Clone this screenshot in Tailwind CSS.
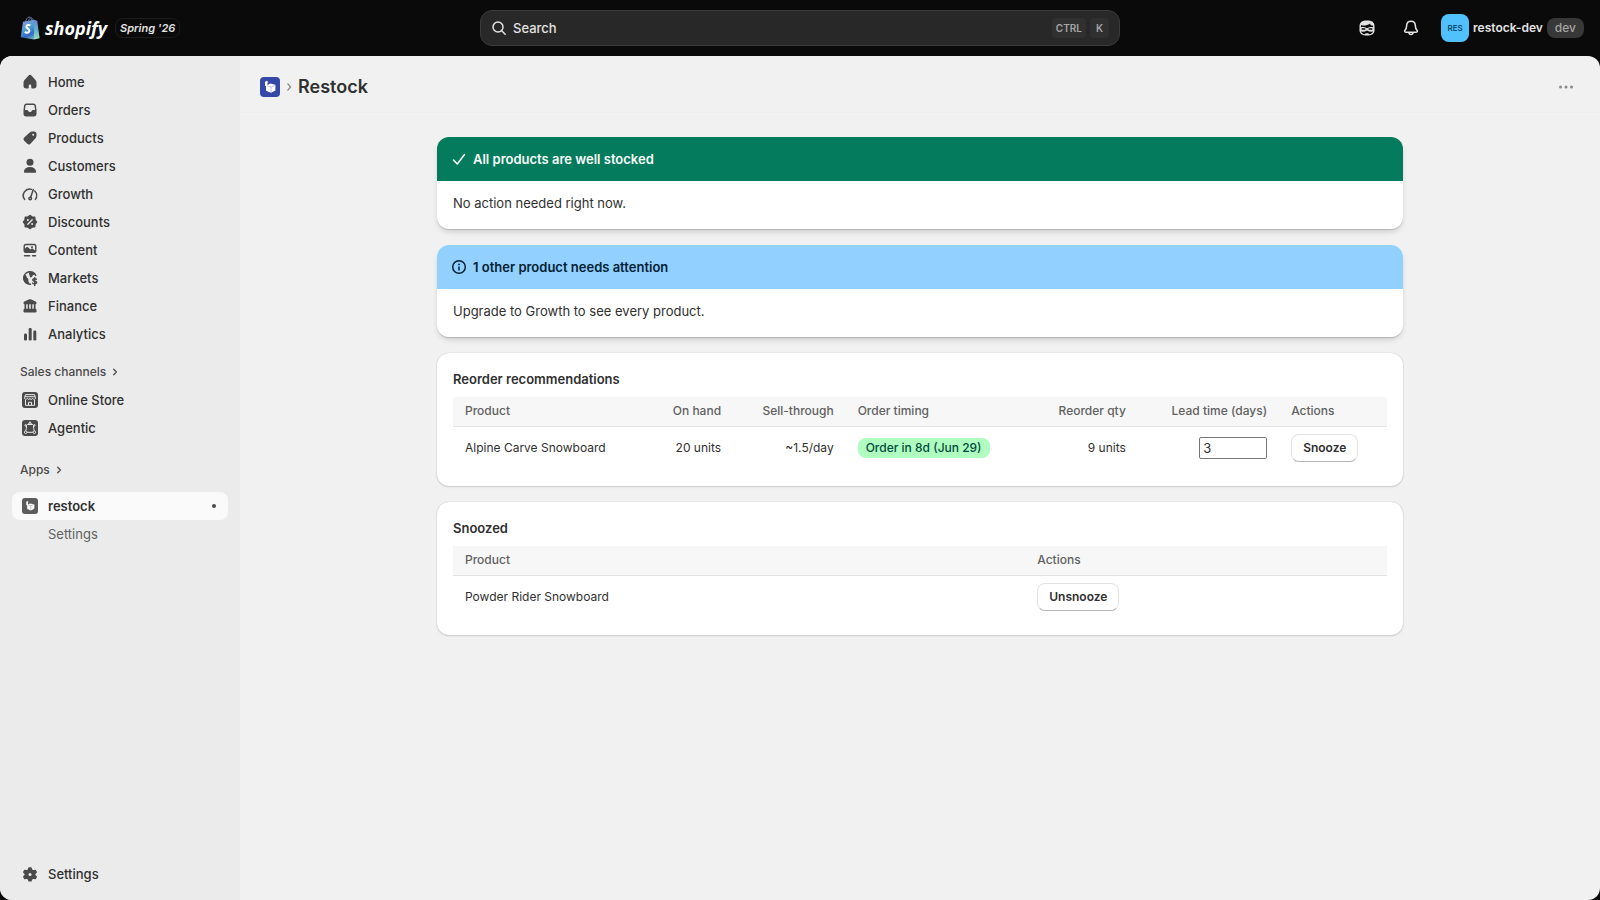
<!DOCTYPE html>
<html lang="en">
<head>
    <meta charset="UTF-8">
    <meta name="viewport" content="width=device-width, initial-scale=1.0">
    <title>Restock</title>
    <script src="https://cdn.jsdelivr.net/npm/@tailwindcss/browser@4"></script>
</head>
<body class="bg-[#0a0a0a] font-['Inter',sans-serif] text-[13px] leading-5 text-[#303030]">
<div class="flex min-h-screen flex-col">

    <!-- Top bar -->
    <header class="grid h-14 grid-cols-[1fr_minmax(0,640px)_1fr] items-center">
        <div class="flex items-center pl-5">
            <a href="#" class="flex items-center gap-[5px] text-white">
                <svg class="h-6 w-5" viewBox="0 0 20 24" fill="none">
                    <defs>
                        <linearGradient id="bag" x1="3" y1="4" x2="14" y2="24" gradientUnits="userSpaceOnUse">
                            <stop stop-color="#8b93d8"/>
                            <stop offset=".4" stop-color="#4f9fd0"/>
                            <stop offset=".7" stop-color="#3569c4"/>
                            <stop offset="1" stop-color="#7cc7c8"/>
                        </linearGradient>
                        <linearGradient id="side" x1="16" y1="5" x2="17" y2="24" gradientUnits="userSpaceOnUse">
                            <stop stop-color="#6f86d6"/>
                            <stop offset=".5" stop-color="#5fb6c9"/>
                            <stop offset="1" stop-color="#a5dfb8"/>
                        </linearGradient>
                    </defs>
                    <path d="M5.500 6.200C6 3.200 7.500 1 9.200 1c1.500 0 2.300 1.800 2.500 4.200M8.200 5.800C8.700 3.300 10 1.900 11.300 1.900c1 0 1.700 1 1.900 2.900" stroke="#6d7fb0" stroke-width=".9"/>
                    <path d="M3 5.800 14 3.800v19.800L.7 21.300 3 5.800Z" fill="url(#bag)"/>
                    <path d="M14 3.800 17.200 4.800 19.600 22.200 14 23.600V3.800Z" fill="url(#side)"/>
                    <path d="M10.300 9.400c-.8-.5-3.900-.9-3.900 1.300 0 2 3.300 2 3 4.300-.2 2-2.900 2.100-4.600.9" stroke="#fff" stroke-width="2.100"/>
                </svg>
                <span class="font-['Open_Sans',sans-serif] text-lg leading-6 font-bold italic">shopify</span>
            </a>
            <span class="ml-2 rounded-lg border border-[#1c1c1c] px-1 text-[11px] leading-[18px] font-semibold text-[#e3e3e3] italic">Spring '26</span>
        </div>
        <button type="button" class="flex h-9 items-center gap-1 rounded-xl border border-[#3a3a3a] bg-[#282828] pr-2.5 pl-2 font-medium text-[#e3e3e3]">
            <svg class="size-5" viewBox="0 0 20 20" fill="none" stroke="currentColor" stroke-width="1.500" stroke-linecap="round"><circle cx="9" cy="9" r="5"/><path d="m12.700 12.700 3.500 3.500"/></svg>
            <span>Search</span>
            <kbd class="ml-auto rounded bg-[#303030] px-1 font-['Inter',sans-serif] text-[10px] leading-5 font-semibold text-[#a5a5a5]">CTRL</kbd>
            <kbd class="rounded bg-[#303030] px-1.5 font-['Inter',sans-serif] text-[10px] leading-5 font-semibold text-[#a5a5a5]">K</kbd>
        </button>
        <div class="flex items-center justify-end pr-4">
            <button type="button" aria-label="Sidekick" class="mr-6 text-[#e3e3e3]">
                <svg class="size-5" viewBox="0 0 20 20" fill="none">
                    <path d="M2.500 8c0-3.700 2.700-5.500 7.500-5.500s7.500 1.800 7.500 5.500v4.200c0 3.500-2.700 5.300-7.500 5.300s-7.500-1.800-7.500-5.300V8Z" fill="currentColor"/>
                    <path d="M4 6.900c2.600 1 6 .6 9.200-1.500-.3 1.200.7 2.200 2.900 2.400v1.500c-1.600-.4-3.300-.2-6.100.9-2.800-1.100-4.500-1.300-6.100-.9V8.300Z" fill="#0a0a0a"/>
                    <path d="M5.200 11h2.600M12.200 11h2.600" stroke="#0a0a0a" stroke-width="1.600" stroke-linecap="round"/>
                    <path d="M4 13.500c2.200.4 4.300 0 6-1.100 1.700 1.100 3.800 1.500 6 1.100-.4 1.500-1.800 2.500-4 2.700l-.6-1H8.600l-.6 1c-2.200-.2-3.600-1.200-4-2.700Z" fill="#0a0a0a"/>
                </svg>
            </button>
            <button type="button" aria-label="Notifications" class="mr-5 text-[#e3e3e3]">
                <svg class="size-5" viewBox="0 0 20 20" fill="none" stroke="currentColor" stroke-width="1.500" stroke-linejoin="round">
                    <path d="M10 3.200c-2.600 0-4.200 1.900-4.300 4.200C5.600 10 5.200 11 4 12.300c-.7.800-.4 1.900.8 1.900h10.400c1.200 0 1.500-1.100.8-1.900-1.200-1.300-1.600-2.300-1.700-4.900-.1-2.300-1.700-4.200-4.300-4.200Z"/>
                    <path d="M8 14.500a2 2 0 0 0 4 0"/>
                </svg>
            </button>
            <button type="button" class="flex items-center gap-1">
                <span class="flex size-7 items-center justify-center rounded-lg bg-[#51c0ff] text-[8px] font-medium text-[#003a5a]">RES</span>
                <span class="text-xs font-semibold text-[#e3e3e3]">restock-dev</span>
                <span class="rounded-lg bg-[#383838] px-2 text-xs leading-5 font-medium text-[#a5a5a5]">dev</span>
            </button>
        </div>
    </header>

    <div class="flex grow overflow-hidden rounded-xl bg-[#f1f1f1]">
        <!-- Sidebar -->
        <nav class="flex w-60 shrink-0 flex-col bg-[#ebebeb] p-3 font-medium">
            <ul>
                <li><a href="#" class="flex h-7 items-center gap-2 px-2">
                    <svg class="size-5 text-[#4a4a4a]" viewBox="0 0 20 20" fill="currentColor"><path d="M8.344 3.692a2.250 2.250 0 0 1 3.312 0l3.854 4.190a3.750 3.750 0 0 1 .99 2.538v3.330a2.750 2.750 0 0 1-2.750 2.750h-1.750a.75.75 0 0 1-.75-.75v-2a1.250 1.250 0 1 0-2.500 0v2a.75.75 0 0 1-.75.75h-1.750a2.750 2.750 0 0 1-2.750-2.750v-3.330c0-.94.353-1.846.99-2.539l3.854-4.189Z"/></svg>
                    Home</a></li>
                <li><a href="#" class="flex h-7 items-center gap-2 px-2">
                    <svg class="size-5 text-[#4a4a4a]" viewBox="0 0 20 20" fill="currentColor"><path fill-rule="evenodd" d="M6.500 3.500h7a2.500 2.500 0 0 1 2.450 2L16.500 10v3.750a2.750 2.750 0 0 1-2.750 2.750h-7.500a2.750 2.750 0 0 1-2.750-2.750V10l.55-4.500a2.500 2.500 0 0 1 2.450-2Zm0 1.500a1 1 0 0 0-1 .85L5 10h2.200c.5 0 .8.300 1 .7.300.8 1 1.300 1.800 1.300s1.500-.5 1.800-1.300c.2-.4.500-.7 1-.7H15l-.5-4.150a1 1 0 0 0-1-.85h-7Z"/></svg>
                    Orders</a></li>
                <li><a href="#" class="flex h-7 items-center gap-2 px-2">
                    <svg class="size-5 text-[#4a4a4a]" viewBox="0 0 20 20" fill="currentColor"><path fill-rule="evenodd" d="M12.200 3.500h1.800a2.500 2.500 0 0 1 2.500 2.500v1.800c0 .9-.4 1.800-1 2.500l-5 5.400a2.250 2.250 0 0 1-3.200.1L4.200 12.700a2.250 2.250 0 0 1 0-3.200l5.500-5a3.700 3.700 0 0 1 2.500-1Zm1 4.300a1 1 0 1 0 0-2 1 1 0 0 0 0 2Z"/></svg>
                    Products</a></li>
                <li><a href="#" class="flex h-7 items-center gap-2 px-2">
                    <svg class="size-5 text-[#4a4a4a]" viewBox="0 0 20 20" fill="currentColor"><circle cx="10" cy="6.300" r="3.500"/><path d="M3.900 15.500C4.300 12.700 6.500 11 10 11s5.700 1.700 6.100 4.500c.1.800-.5 1.300-1.200 1.300H5.100c-.7 0-1.300-.5-1.200-1.300Z"/></svg>
                    Customers</a></li>
                <li><a href="#" class="flex h-7 items-center gap-2 px-2">
                    <svg class="size-5 text-[#4a4a4a]" viewBox="0 0 20 20" fill="none" stroke="currentColor" stroke-width="1.500" stroke-linecap="round"><path d="M4.600 15.400a6.400 6.400 0 0 1 6.900-10M14.700 7a6.400 6.400 0 0 1 .7 8.400"/><path d="m13.300 5.600-2.700 8"/><circle cx="10.200" cy="14.500" r="1.300"/></svg>
                    Growth</a></li>
                <li><a href="#" class="flex h-7 items-center gap-2 px-2">
                    <svg class="size-5 text-[#4a4a4a]" viewBox="0 0 20 20" fill="currentColor"><path stroke="currentColor" stroke-width="2" stroke-linejoin="round" d="m10 3.700 2 1.600 2.500.2.200 2.500 1.600 2-1.600 2-.2 2.500-2.500.2-2 1.600-2-1.600-2.500-.2-.2-2.500-1.600-2 1.600-2 .2-2.500 2.500-.2L10 3.700Z"/><path d="m7.800 12.200 4.400-4.400" stroke="#ebebeb" stroke-width="1.300" stroke-linecap="round"/><circle cx="7.900" cy="8" r="1" fill="#ebebeb"/><circle cx="12.100" cy="12" r="1" fill="#ebebeb"/></svg>
                    Discounts</a></li>
                <li><a href="#" class="flex h-7 items-center gap-2 px-2">
                    <svg class="size-5 text-[#4a4a4a]" viewBox="0 0 20 20" fill="currentColor"><path fill-rule="evenodd" d="M6 3.800h8a2.500 2.500 0 0 1 2.500 2.500v4.200a2.500 2.500 0 0 1-2.500 2.500H6a2.500 2.500 0 0 1-2.500-2.500V6.300A2.500 2.500 0 0 1 6 3.800Zm0 1.400a1.100 1.100 0 0 0-1.100 1.100v2.200l1.500-1.200c.6-.5 1.300-.4 1.800.1l2.200 2.200 1-.8c.6-.4 1.200-.4 1.700.1l2 1.700V6.300A1.100 1.100 0 0 0 14 5.200H6Zm6 3a1 1 0 1 0 0-2 1 1 0 0 0 0 2Z"/><rect x="3.800" y="14.900" width="6.500" height="1.500" rx=".75"/><rect x="11.800" y="14.900" width="4.500" height="1.500" rx=".75"/></svg>
                    Content</a></li>
                <li><a href="#" class="flex h-7 items-center gap-2 px-2">
                    <svg class="size-5 text-[#4a4a4a]" viewBox="0 0 20 20" fill="none" stroke="currentColor"><path stroke-width="1.500" stroke-linecap="round" d="M10.500 16.300A6.300 6.300 0 1 1 15.800 7.500"/><path fill="currentColor" stroke="none" d="M4 6.500c2 .2 2.600 1.400 2.700 2.500.1 1 1.300 1 1.600 2 .3 1.200-.3 2 .4 3 .5.800 1 1.500.8 2.500-3.700-.3-6-3-6-6.300 0-1.300.2-2.600.5-3.700ZM10 3.500c2.400 0 4.500 1.200 5.600 3-1 .3-2.300.2-2.800 1-.5.900-1.300 2.500-2.500 1.800-.8-.5-.2-1.600-.9-2.300-.8-.8-.6-2.500.6-3.500Z"/><path stroke-width="1.500" stroke-linecap="round" d="M16.300 11.200c-.5-.6-3.500-.8-3.500.8 0 1.700 3.900.8 3.900 2.600 0 1.500-3.300 1.500-4.100.5M14.700 9.700v7.700"/></svg>
                    Markets</a></li>
                <li><a href="#" class="flex h-7 items-center gap-2 px-2">
                    <svg class="size-5 text-[#4a4a4a]" viewBox="0 0 20 20" fill="currentColor"><path d="M9.200 3.300a2 2 0 0 1 1.600 0l4.800 2.300c.6.300.9.800.9 1.400 0 .8-.6 1.300-1.300 1.300H4.800c-.7 0-1.300-.5-1.300-1.300 0-.6.300-1.100.9-1.400l4.800-2.300ZM4.500 8h1.700v5H4.500zM7.700 8h1.500v5H7.700zM10.800 8h1.500v5h-1.500zM13.800 8h1.700v5h-1.700z"/><rect x="3.500" y="12.700" width="13" height="3.800" rx="1.200"/></svg>
                    Finance</a></li>
                <li><a href="#" class="flex h-7 items-center gap-2 px-2">
                    <svg class="size-5 text-[#4a4a4a]" viewBox="0 0 20 20" fill="currentColor"><rect x="4" y="9.500" width="3" height="7" rx="1.200"/><rect x="8.700" y="4" width="3" height="12.500" rx="1.200"/><rect x="13.300" y="6.500" width="3" height="10" rx="1.200"/></svg>
                    Analytics</a></li>
            </ul>

            <a href="#" class="mt-2.5 flex h-7 items-center px-2 text-xs text-[#4a4a4a]">Sales channels
                <svg class="ml-px size-4" viewBox="0 0 16 16" fill="none" stroke="currentColor" stroke-width="1.300" stroke-linecap="round" stroke-linejoin="round"><path d="m6.700 5.300 2.700 2.700-2.700 2.700"/></svg>
            </a>
            <ul>
                <li><a href="#" class="flex h-7 items-center gap-2 px-2">
                    <svg class="size-5" viewBox="0 0 20 20" fill="none" stroke="#ebebeb"><rect x="2" y="2" width="16" height="16" rx="3" fill="#4a4a4a" stroke="none"/><path d="M5.500 4.600h9l1 3.200c0 1.800-2.200 2-2.900.6-.7 1.400-2.400 1.400-2.600 0-.5 1.400-2 1.400-2.600 0-.7 1.400-2.900 1.200-2.900-.6l1-3.200ZM5.500 10v5.300h9V10M8.500 15.300v-3h3v3M5 6.700h10"/></svg>
                    Online Store</a></li>
                <li><a href="#" class="flex h-7 items-center gap-2 px-2">
                    <svg class="size-5" viewBox="0 0 20 20" fill="none" stroke="#ebebeb"><rect x="2" y="2" width="16" height="16" rx="3" fill="#4a4a4a" stroke="none"/><path d="M7.500 6.500h5c.6 0 1 .4 1 1 0 2 .2 3.800.8 5.300M6.500 7.500c0 2-.2 3.800-.8 5.300M6.500 7.500c0-.6.4-1 1-1M7.200 14.300h5.600M8.300 6.300 9.200 5h1.600l.9 1.300"/><circle cx="10" cy="4.400" r=".6"/><circle cx="5.500" cy="7.300" r=".7"/><circle cx="14.500" cy="7.300" r=".7"/><circle cx="5.700" cy="14.200" r="1.300"/><circle cx="14.300" cy="14.200" r="1.300"/></svg>
                    Agentic</a></li>
            </ul>

            <a href="#" class="mt-3.5 flex h-7 items-center px-2 text-xs text-[#4a4a4a]">Apps
                <svg class="ml-px size-4" viewBox="0 0 16 16" fill="none" stroke="currentColor" stroke-width="1.300" stroke-linecap="round" stroke-linejoin="round"><path d="m6.700 5.300 2.700 2.700-2.700 2.700"/></svg>
            </a>
            <ul class="mt-2">
                <li><a href="#" class="flex h-7 items-center gap-2 rounded-lg bg-[#fafafa] px-2 font-semibold">
                    <svg class="size-5" viewBox="0 0 20 20"><rect x="2" y="2" width="16" height="16" rx="3" fill="#5c5c5c"/><path fill="#fff" d="M6.100 5.900 7.500 5l1.200 1.200-.7.100v2.300l2-1.100 4.300.8v4.500l-3.500 1.800L7.200 13V9.200H6.300V6.700Z"/><path d="m8 8.800 2.800 1 3.200-1.300M10.800 9.800v4" stroke="#8a8a8a" stroke-width=".5" fill="none"/></svg>
                    restock
                    <span class="mr-1 ml-auto size-1 rounded-full bg-[#4a4a4a]"></span></a></li>
                <li><a href="#" class="flex h-7 items-center pl-9 font-normal text-[#616161]">Settings</a></li>
            </ul>

            <a href="#" class="mt-auto flex h-7 items-center gap-2 px-2">
                <svg class="size-5 text-[#4a4a4a]" viewBox="0 0 20 20"><path fill="currentColor" stroke="currentColor" stroke-width="1.500" stroke-linejoin="round" d="M9 4h2l.5 2 1.700 1 2-.6 1 1.800L14.700 9.600v1.800l1.500 1.400-1 1.800-2-.6-1.700 1-.5 1.700H9l-.5-1.700-1.700-1-2 .6-1-1.800 1.500-1.400V9.600L3.800 8.200l1-1.800 2 .6 1.700-1L9 4Z"/><circle cx="10" cy="10.400" r="1.500" fill="#ebebeb"/></svg>
                Settings
            </a>
        </nav>

        <!-- Page -->
        <main class="min-w-0 grow">
            <div class="flex h-[57px] items-center border-b border-[#eeeeee] px-5 pt-1.5">
                <svg class="size-5" viewBox="0 0 20 20"><rect width="20" height="20" rx="4" fill="#3548a8"/><path fill="#fff" d="M4.800 5 6.800 3.800 8.500 5.300l-1 .2v2.800L10 6.500l5.400 1.200v5.800L11 15.800l-5-2V9H5V6Z"/><path d="m7.500 8.800 3.500 1.300 4-1.700M11 10.100v5.200" stroke="#8c9add" stroke-width=".6" fill="none"/></svg>
                <svg class="mx-px size-4 text-[#8a8a8a]" viewBox="0 0 16 16" fill="none" stroke="currentColor" stroke-width="1.300" stroke-linecap="round" stroke-linejoin="round"><path d="M6.900 4.800 9.500 8l-2.600 3.200"/></svg>
                <h1 class="text-lg font-semibold">Restock</h1>
                <button type="button" aria-label="More actions" class="ml-auto p-1 text-[#8a8a8a]">
                    <svg class="size-5" viewBox="0 0 20 20" fill="currentColor"><circle cx="4.500" cy="10" r="1.500"/><circle cx="10" cy="10" r="1.500"/><circle cx="15.500" cy="10" r="1.500"/></svg>
                </button>
            </div>

            <div class="mx-auto flex max-w-[998px] flex-col gap-4 px-4 py-6">
                <section class="overflow-hidden rounded-xl bg-white shadow-[0_4px_6px_-2px_rgba(26,26,26,0.2),0_1px_1px_rgba(26,26,26,0.15)]">
                    <div class="flex h-11 items-center gap-1 bg-[#047b5d] px-3 text-[#fafffc]">
                        <svg class="size-5" viewBox="0 0 20 20" fill="none" stroke="currentColor" stroke-width="1.500" stroke-linecap="round" stroke-linejoin="round"><path d="m4.500 11 3.800 4 7.200-9.500"/></svg>
                        <h2 class="font-semibold">All products are well stocked</h2>
                    </div>
                    <p class="px-4 pt-3 pb-4">No action needed right now.</p>
                </section>

                <section class="overflow-hidden rounded-xl bg-white shadow-[0_4px_6px_-2px_rgba(26,26,26,0.2),0_1px_1px_rgba(26,26,26,0.15)]">
                    <div class="flex h-11 items-center gap-1 bg-[#91d0ff] px-3 text-[#002133]">
                        <svg class="size-5" viewBox="0 0 20 20" fill="none" stroke="currentColor" stroke-width="1.500" stroke-linecap="round"><circle cx="10" cy="10" r="6.300"/><path d="M10 10v3"/><circle cx="10" cy="7.400" r=".9" fill="currentColor" stroke="none"/></svg>
                        <h2 class="font-semibold">1 other product needs attention</h2>
                    </div>
                    <p class="px-4 pt-3 pb-4">Upgrade to Growth to see every product.</p>
                </section>

                <section class="rounded-xl bg-white p-4 shadow-[0_1px_2px_rgba(26,26,26,0.15),0_0_1px_rgba(26,26,26,0.3)]">
                    <h2 class="mb-2 font-semibold">Reorder recommendations</h2>
                    <table class="w-full text-xs leading-5">
                        <thead class="border-b border-[#e3e3e3] bg-[#f7f7f7] text-[#616161]">
                            <tr class="h-[29px]">
                                <th class="px-3 text-left font-medium">Product</th>
                                <th class="px-3 text-right font-medium">On hand</th>
                                <th class="px-3 text-right font-medium">Sell-through</th>
                                <th class="px-3 text-left font-medium">Order timing</th>
                                <th class="px-3 text-right font-medium">Reorder qty</th>
                                <th class="px-3 text-right font-medium">Lead time (days)</th>
                                <th class="px-3 text-left font-medium">Actions</th>
                            </tr>
                        </thead>
                        <tbody>
                            <tr class="h-11">
                                <td class="px-3">Alpine Carve Snowboard</td>
                                <td class="px-3 text-right">20 units</td>
                                <td class="px-3 text-right">~1.5/day</td>
                                <td class="px-3"><span class="inline-block rounded-lg bg-[#affebf] px-2 font-medium text-[#014b40]">Order in 8d (Jun 29)</span></td>
                                <td class="px-3 text-right">9 units</td>
                                <td class="px-3 text-right"><input type="text" inputmode="numeric" value="3" aria-label="Lead time (days)" class="h-[22px] w-17 rounded-xs border border-[#767676] bg-white px-[3px] text-[13px] text-[#303030]"></td>
                                <td class="px-3"><button type="button" class="h-7 rounded-lg border border-[#e3e3e3] border-b-[#b5b5b5] bg-white px-[11px] font-semibold">Snooze</button></td>
                            </tr>
                        </tbody>
                    </table>
                </section>

                <section class="rounded-xl bg-white p-4 shadow-[0_1px_2px_rgba(26,26,26,0.15),0_0_1px_rgba(26,26,26,0.3)]">
                    <h2 class="mb-2 font-semibold">Snoozed</h2>
                    <table class="w-full text-xs leading-5">
                        <thead class="border-b border-[#e3e3e3] bg-[#f7f7f7] text-[#616161]">
                            <tr class="h-[29px]">
                                <th class="px-3 text-left font-medium">Product</th>
                                <th class="px-3 text-left font-medium">Actions</th>
                            </tr>
                        </thead>
                        <tbody>
                            <tr class="h-11">
                                <td class="px-3">Powder Rider Snowboard</td>
                                <td class="px-3"><button type="button" class="h-7 rounded-lg border border-[#e3e3e3] border-b-[#b5b5b5] bg-white px-[11px] font-semibold">Unsnooze</button></td>
                            </tr>
                        </tbody>
                    </table>
                </section>
            </div>
        </main>
    </div>
</div>
</body>
</html>
